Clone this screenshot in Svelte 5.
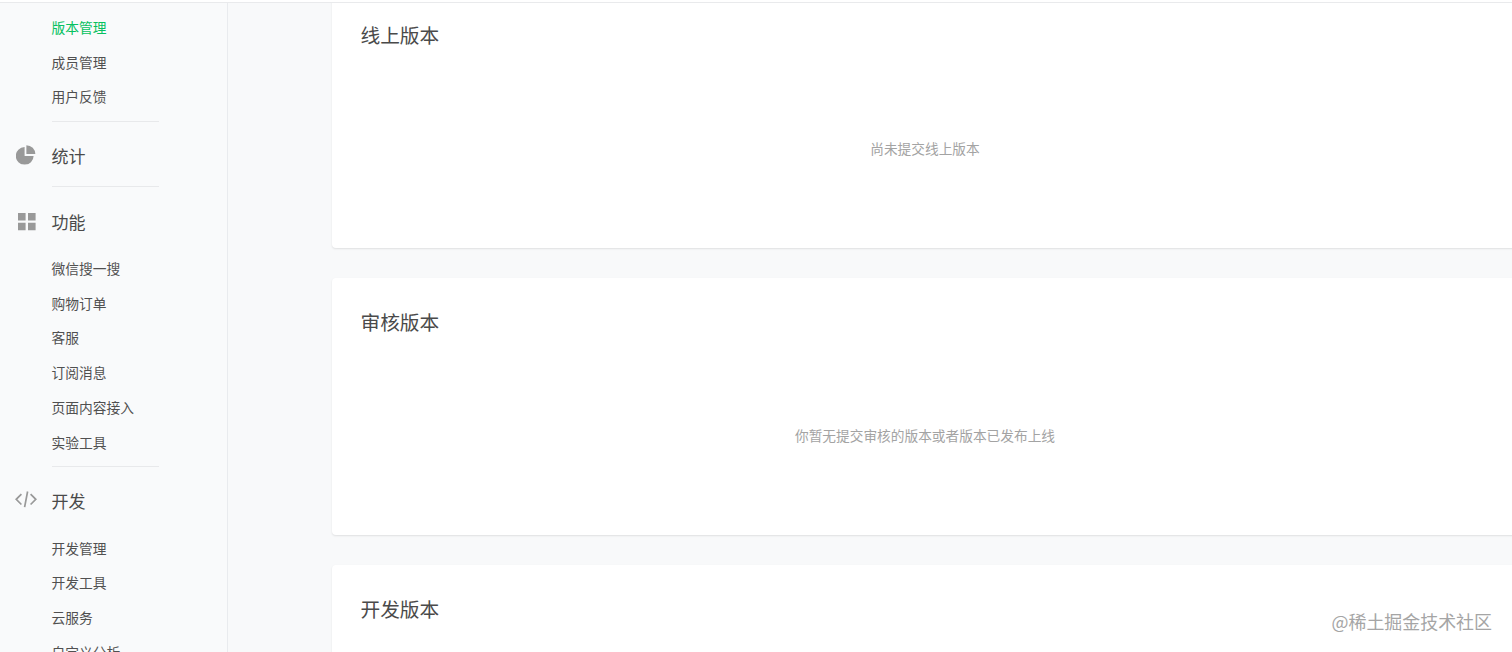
<script>
  const sections = [
    { items: [{ t: '版本管理', active: true }, { t: '成员管理' }, { t: '用户反馈' }], first: true },
    { title: '统计', icon: 'pie', items: [] },
    { title: '功能', icon: 'grid', items: [{ t: '微信搜一搜' }, { t: '购物订单' }, { t: '客服' }, { t: '订阅消息' }, { t: '页面内容接入' }, { t: '实验工具' }] },
    { title: '开发', icon: 'code', items: [{ t: '开发管理' }, { t: '开发工具' }, { t: '云服务' }, { t: '自定义分析' }] }
  ];
  const cards = [
    { title: '线上版本', empty: '尚未提交线上版本' },
    { title: '审核版本', empty: '你暂无提交审核的版本或者版本已发布上线' },
    { title: '开发版本', empty: '' }
  ];
</script>

<div class="page">
  <div class="topbar"></div>
  <div class="body">
    <aside class="sidebar">
      {#each sections as s, i}
        <section class="group" class:solo={s.items.length === 0} class:last={i === sections.length - 1}>
          {#if s.title}
            <div class="head" class:with-items={s.items.length > 0}>
              <span class="icon {s.icon}">
                {#if s.icon === 'pie'}
                  <svg width="20" height="20" viewBox="0 0 20 20"><path d="M8.6 2.6v9h9A8.9 8.9 0 1 1 8.6 2.6z" fill="#999"/><path d="M10.4 0.7a8.9 8.9 0 0 1 8.9 8.9h-8.9z" fill="#999"/></svg>
                {:else if s.icon === 'grid'}
                  <svg width="18" height="18" viewBox="0 0 18 18"><path d="M0 0h7.6v7.4H0zM10 0h7.6v7.4H10zM0 9.8h7.6v7.4H0zM10 9.8h7.6v7.4H10z" fill="#999"/></svg>
                {:else}
                  <svg width="22" height="18" viewBox="0 0 22 18" fill="none" stroke="#999" stroke-width="1.7"><path d="M6.4 3.6 1.2 8.8l5.2 5.2M15.6 3.6l5.2 5.2-5.2 5.2M12.6 1 9.6 16.6"/></svg>
                {/if}
              </span>
              <span class="head-text">{s.title}</span>
            </div>
          {/if}
          {#each s.items as item}
            <a class="item" class:active={item.active} href="#top">{item.t}</a>
          {/each}
        </section>
      {/each}
    </aside>
    <main class="main">
      <div class="scroll">
        {#each cards as c}
          <article class="card">
            <h2>{c.title}</h2>
            {#if c.empty}<p>{c.empty}</p>{/if}
          </article>
        {/each}
      </div>
    </main>
  </div>
  <div class="watermark">@稀土掘金技术社区</div>
</div>

<style>
  :global(body) {
    margin: 0;
    background: #f8f9fa;
    font-family: "Noto Sans CJK SC", "Liberation Sans", sans-serif;
  }
  .page {
    position: relative;
    display: flex;
    flex-direction: column;
    height: 652px;
    overflow: hidden;
  }
  .topbar {
    flex: none;
    height: 2px;
    background: #fff;
    border-bottom: 1px solid #e9eaec;
  }
  .body {
    flex: 1;
    display: flex;
    min-height: 0;
  }
  .sidebar {
    flex: none;
    width: 227px;
    background: #f9fafb;
    border-right: 1px solid #e9ebee;
    overflow: hidden;
    padding-top: 7px;
  }
  .group {
    margin-left: 51.5px;
    width: 107px;
    border-bottom: 1px solid #e8e9eb;
    padding-bottom: 6.5px;
  }
  .group.solo { padding-bottom: 18px; }
  .group.last { border-bottom: 0; }
  .head {
    position: relative;
    display: flex;
    align-items: center;
    height: 24px;
    padding-top: 22.5px;
  }
  .head.with-items { margin-bottom: 17.5px; }
  .icon {
    position: absolute;
    left: -51.5px;
    width: 51.5px;
    bottom: 0;
    height: 24px;
    display: flex;
    align-items: center;
    justify-content: center;
  }
  .icon.pie { transform: translate(0, -1.5px); }
  .icon.grid { transform: translate(1px, 0); }
  .icon.code { transform: translate(0, -1.5px); }
  .head-text {
    font-size: 17px;
    line-height: 24px;
    color: #4a4a4a;
  }
  .item {
    display: block;
    height: 34.7px;
    line-height: 34.7px;
    font-size: 13.75px;
    color: #505050;
    text-decoration: none;
    white-space: nowrap;
  }
  .item.active { color: #07c160; }
  .main {
    flex: 1;
    min-width: 0;
    overflow: hidden;
    background: #f8f9fa;
  }
  .scroll {
    margin-top: -12px;
    padding-left: 104px;
    display: flex;
    flex-direction: column;
    gap: 30px;
  }
  .card {
    flex: none;
    box-sizing: border-box;
    width: 1186px;
    height: 257px;
    background: #fff;
    border-radius: 4px;
    box-shadow: 0 1px 2px rgba(0, 0, 0, 0.1);
    padding: 32px 28.5px 0;
  }
  h2 {
    margin: 0;
    font-size: 19.7px;
    font-weight: 400;
    line-height: 24px;
    color: #4a4a4a;
  }
  p {
    margin: 89px 0 0;
    text-align: center;
    font-size: 13.7px;
    line-height: 24px;
    color: #a3a3a3;
  }
  .watermark {
    position: absolute;
    right: 20px;
    top: 608px;
    font-size: 17.95px;
    line-height: 26px;
    color: #a5a5a5;
    white-space: nowrap;
  }
</style>
